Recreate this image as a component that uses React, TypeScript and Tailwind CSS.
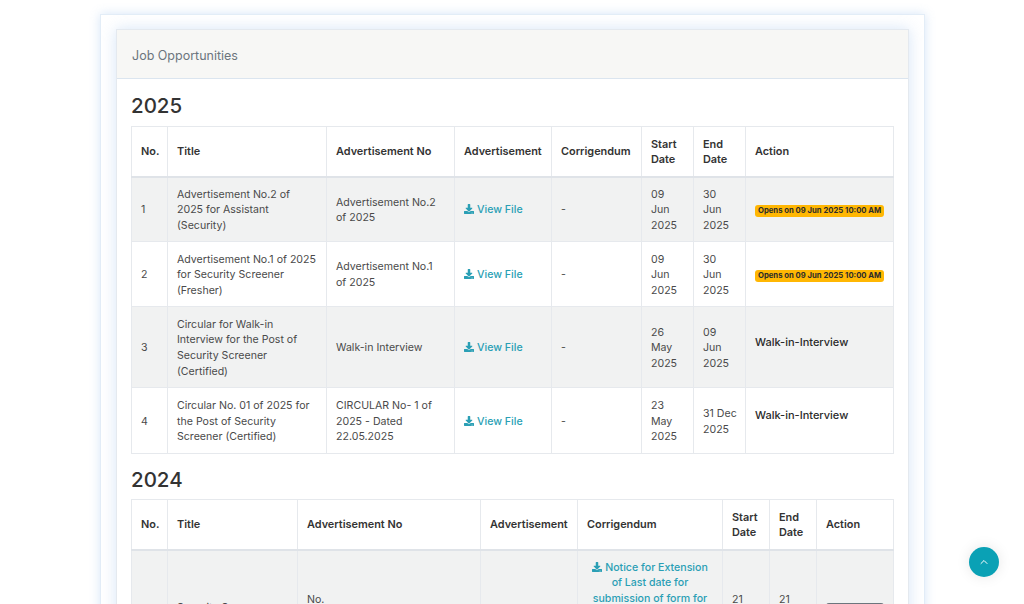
import { FaDownload } from "react-icons/fa";
import { ChevronUp } from "lucide-react";

const cell = "border border-[#e6e9ed] px-[9px] pt-[9px] pb-[7px] align-middle";
const head = "border border-[#e6e9ed] border-b-[2px] border-b-[#dfe3e8] px-[9px] pt-[9px] pb-[7px] align-middle text-left text-[10.9px] font-semibold text-[#333]";

function ViewFile({ label = "View File" }: { label?: string }) {
  return (
    <a className="text-[#2a9fb5] font-medium">
      <FaDownload className="inline-block w-[10px] h-[10px] mr-[3px] align-[-1px]" />
      {label}
    </a>
  );
}

function Opens() {
  return (
    <span className="inline-block rounded-[3px] bg-[#ffb703] px-[3px] text-[7.7px] leading-[12px] font-bold text-[#2b2b2b] whitespace-nowrap">
      Opens on 09 Jun 2025 10:00 AM
    </span>
  );
}

function HeaderRow() {
  return (
    <tr className="h-[50px]">
      <th className={head}>No.</th>
      <th className={head}>Title</th>
      <th className={head}>Advertisement No</th>
      <th className={head}>Advertisement</th>
      <th className={head}>Corrigendum</th>
      <th className={head}>Start Date</th>
      <th className={head}>End Date</th>
      <th className={head}>Action</th>
    </tr>
  );
}

const jobs2025 = [
  { no: 1, title: "Advertisement No.2 of 2025 for Assistant (Security)", adv: "Advertisement No.2 of 2025", start: "09 Jun 2025", end: "30 Jun 2025", opens: true, h: "h-[65px]" },
  { no: 2, title: "Advertisement No.1 of 2025 for Security Screener (Fresher)", adv: "Advertisement No.1 of 2025", start: "09 Jun 2025", end: "30 Jun 2025", opens: true, h: "h-[65px]" },
  { no: 3, title: "Circular for Walk-in Interview for the Post of Security Screener (Certified)", adv: "Walk-in Interview", start: "26 May 2025", end: "09 Jun 2025", opens: false, h: "h-[81px]" },
  { no: 4, title: "Circular No. 01 of 2025 for the Post of Security Screener (Certified)", adv: "CIRCULAR No- 1 of 2025 - Dated 22.05.2025", start: "23 May 2025", end: "31\u00a0Dec 2025", opens: false, h: "h-[66px]" },
];

export default function App() {
  return (
    <div className="h-[604px] overflow-hidden bg-white font-['Inter',sans-serif] text-[10.6px] leading-[15.6px] text-[#4a4a4a]">
      <div className="ml-[100px] mt-[14px] w-[825px] border border-[#e3edf7] bg-white px-[15px] pt-[14px] shadow-[0_0_10px_rgba(120,170,230,0.3)]">
        <div className="border border-[#e4e9ef] bg-white shadow-[0_0_14px_rgba(120,170,230,0.3)]">
          <div className="flex h-[49px] items-center border-b border-[#dbe5ef] bg-[#f7f7f5] px-[15px] pt-[3px] text-[12.5px] text-[#6c757d]">
            Job Opportunities
          </div>
          <div className="px-[14px] pt-[14px]">
            <h2 className="mb-[7px] text-[20.5px] leading-[26px] font-medium text-[#333]">2025</h2>
            <table className="w-[762px] table-fixed border-collapse">
              <colgroup>
                <col className="w-[36px]" />
                <col className="w-[159px]" />
                <col className="w-[128px]" />
                <col className="w-[97px]" />
                <col className="w-[90px]" />
                <col className="w-[52px]" />
                <col className="w-[52px]" />
                <col className="w-[148px]" />
              </colgroup>
              <thead>
                <HeaderRow />
              </thead>
              <tbody>
                {jobs2025.map((job) => (
                  <tr key={job.no} className={`${job.h} ${job.no % 2 === 1 ? "bg-[#f1f2f2]" : "bg-white"}`}>
                    <td className={cell}>{job.no}</td>
                    <td className={cell}>{job.title}</td>
                    <td className={cell}>{job.adv}</td>
                    <td className={cell}><ViewFile /></td>
                    <td className={cell}>-</td>
                    <td className={cell}>{job.start}</td>
                    <td className={cell}>{job.end}</td>
                    <td className={cell}>
                      {job.opens ? (
                        <Opens />
                      ) : (
                        <div className="pb-[11px] text-[11px] font-medium text-[#2b2b2b]">Walk-in-Interview</div>
                      )}
                    </td>
                  </tr>
                ))}
              </tbody>
            </table>

            <h2 className="mt-[13px] mb-[6px] text-[20.5px] leading-[26px] font-medium text-[#333]">2024</h2>
            <table className="w-[762px] table-fixed border-collapse">
              <colgroup>
                <col className="w-[36px]" />
                <col className="w-[130px]" />
                <col className="w-[183px]" />
                <col className="w-[97px]" />
                <col className="w-[145px]" />
                <col className="w-[47px]" />
                <col className="w-[47px]" />
                <col className="w-[77px]" />
              </colgroup>
              <thead>
                <HeaderRow />
              </thead>
              <tbody>
                <tr className="h-[130px] bg-[#f1f2f2]">
                  <td className={cell}>1</td>
                  <td className={cell}>Security Screener (Fresher)</td>
                  <td className={cell}>
                    No.
                    <br />
                    1 of 2024
                    <br />
                    Security Screener
                  </td>
                  <td className={cell}></td>
                  <td className={`${cell} !align-top text-center`}>
                    <ViewFile label="Notice for Extension of Last date for submission of form for Security Screener" />
                  </td>
                  <td className={cell}>21 Oct 2024</td>
                  <td className={cell}>21 Nov 2024</td>
                  <td className={cell}>
                    <span className="block rounded-[3px] bg-[#6c757d] px-[3px] py-[1px] text-center text-[7.7px] leading-[12px] font-bold text-white">
                      Application Closed
                    </span>
                  </td>
                </tr>
              </tbody>
            </table>
          </div>
        </div>
      </div>
      <button className="fixed right-[25px] bottom-[27px] flex h-[30px] w-[30px] items-center justify-center rounded-full bg-[#0aa1b5] text-white shadow-[0_0_14px_rgba(0,0,0,0.1)]">
        <ChevronUp size={12} />
      </button>
    </div>
  );
}
